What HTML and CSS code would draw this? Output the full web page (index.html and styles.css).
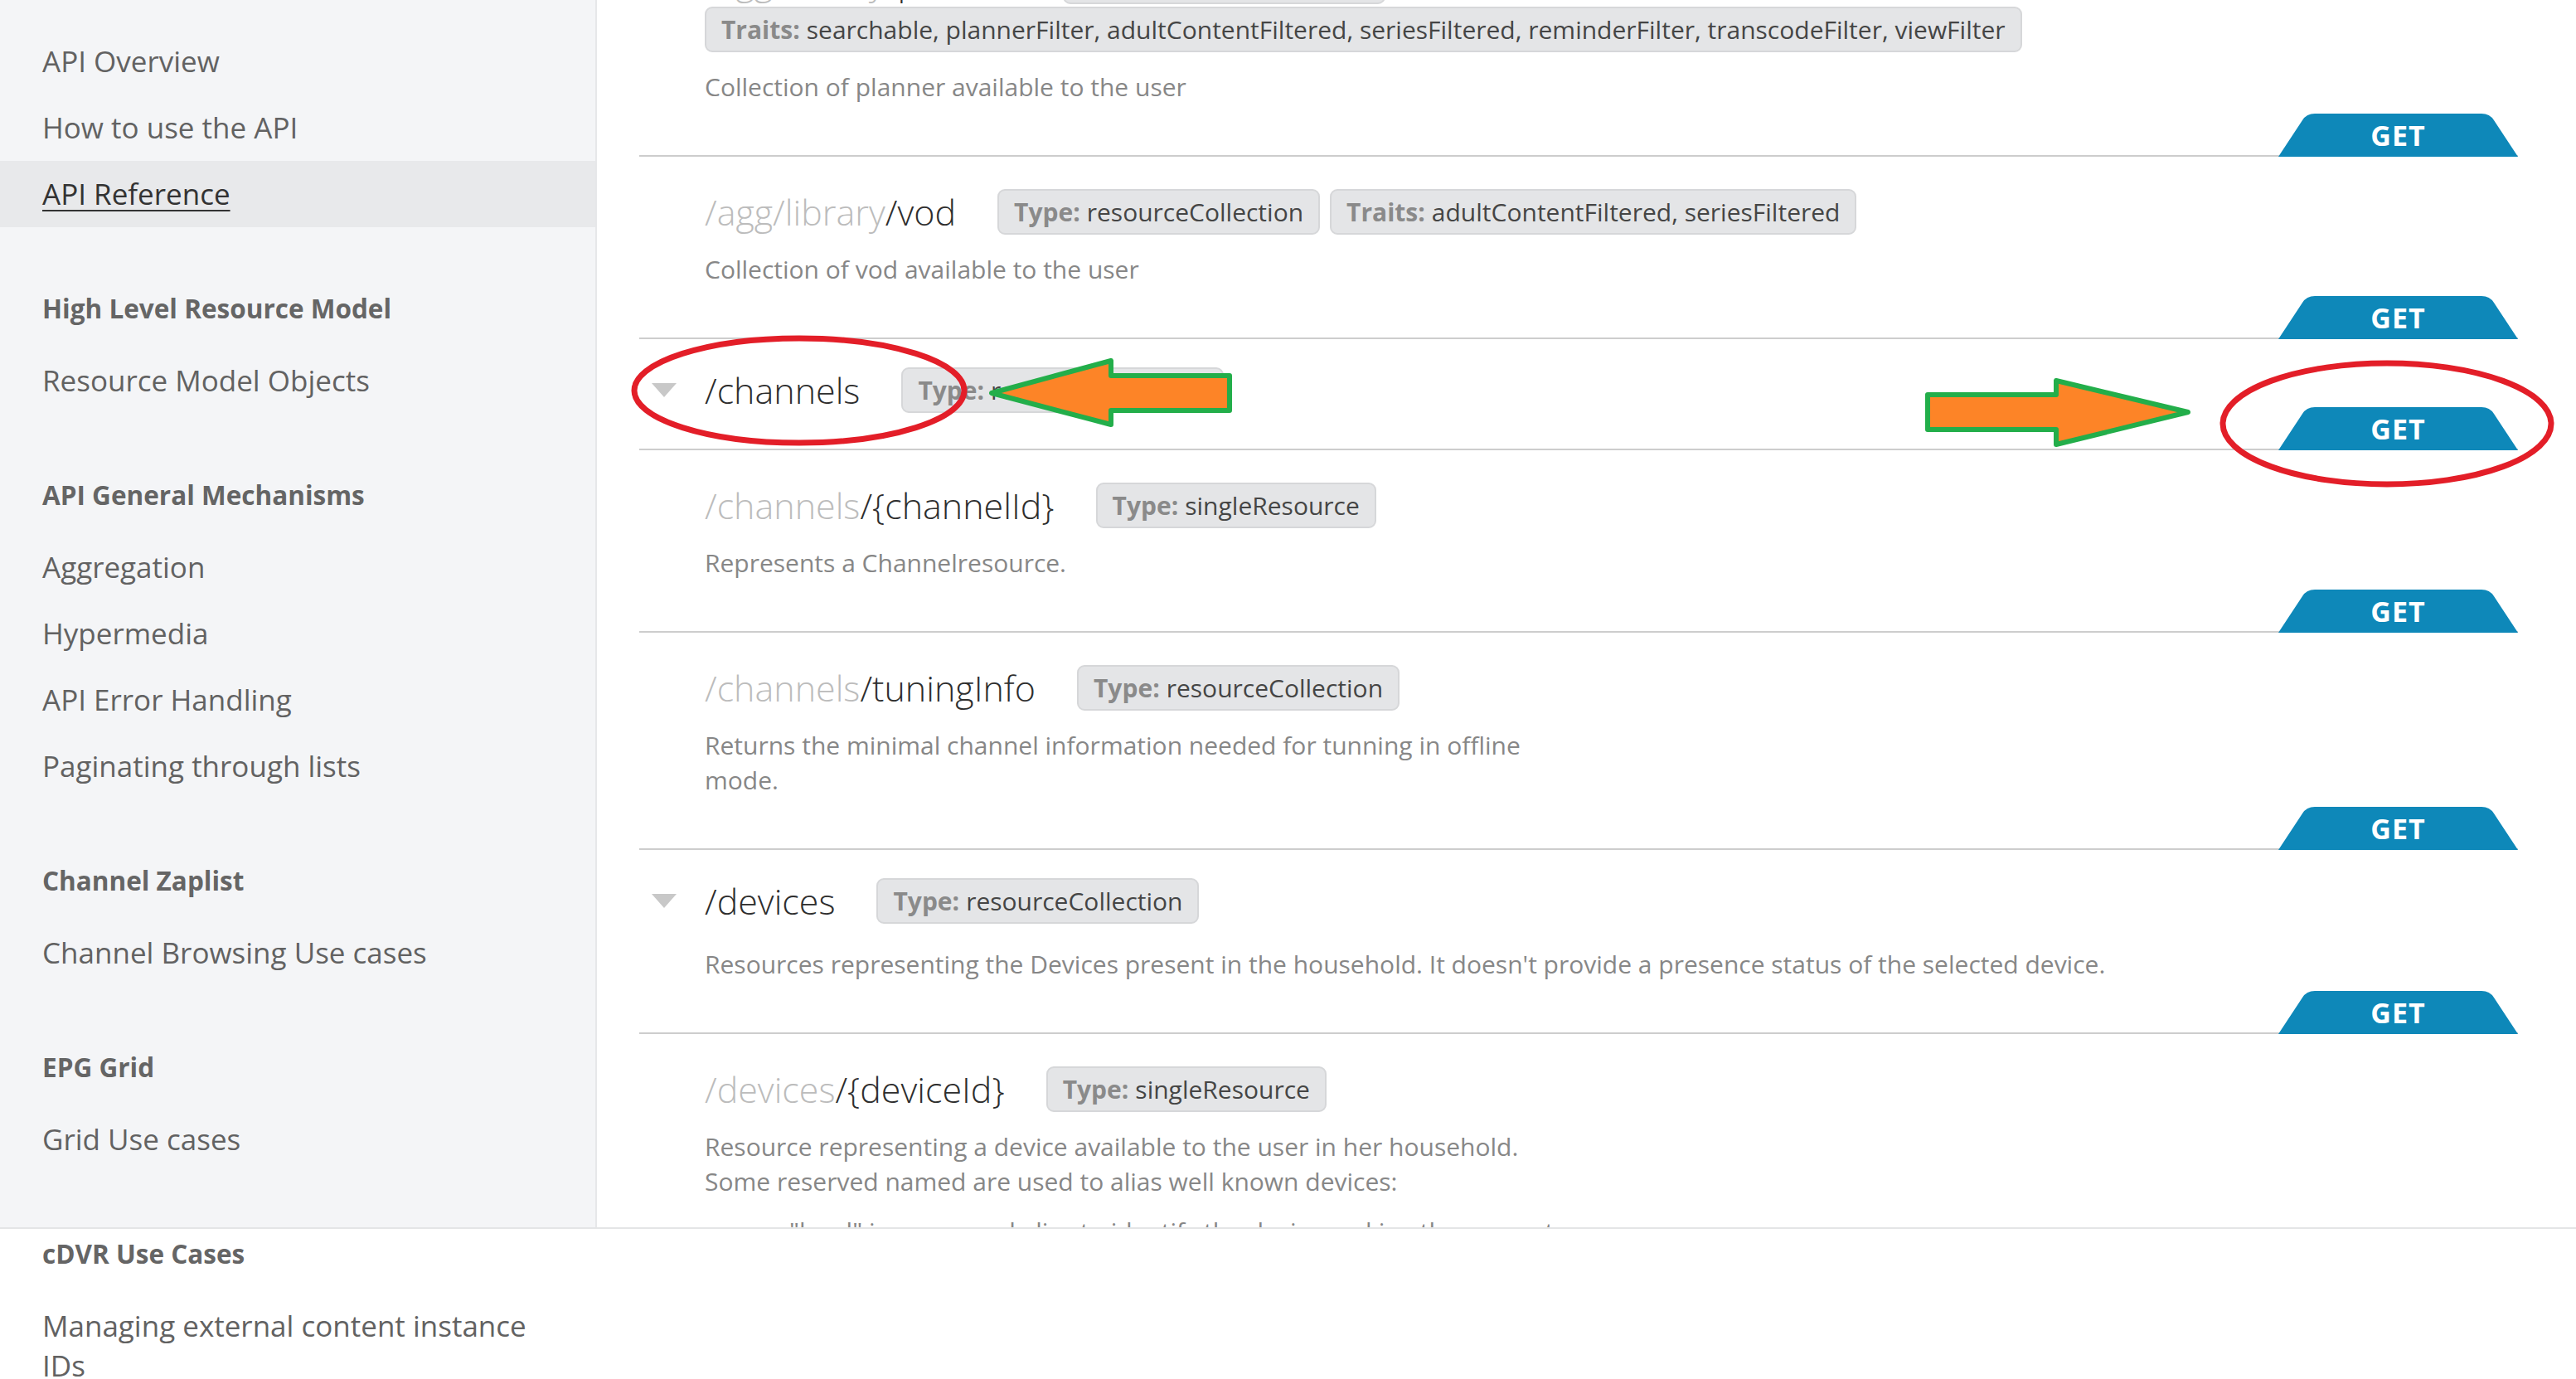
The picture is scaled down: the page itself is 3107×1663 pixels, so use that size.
FILE: index.html
```html
<!DOCTYPE html>
<html lang="en">
<head>
<meta charset="utf-8">
<title>API Reference</title>
<link rel="stylesheet" href="styles.css">
</head>
<body>
<div class="frame">
  <aside class="sidebar">
    <nav class="nav">
      <a class="nav-item" href="#">API Overview</a>
      <a class="nav-item" href="#">How to use the API</a>
      <a class="nav-item active" href="#">API Reference</a>

      <h3 class="nav-head">High Level Resource Model</h3>
      <a class="nav-item" href="#">Resource Model Objects</a>

      <h3 class="nav-head">API General Mechanisms</h3>
      <a class="nav-item" href="#">Aggregation</a>
      <a class="nav-item" href="#">Hypermedia</a>
      <a class="nav-item" href="#">API Error Handling</a>
      <a class="nav-item" href="#">Paginating through lists</a>

      <h3 class="nav-head">Channel Zaplist</h3>
      <a class="nav-item" href="#">Channel Browsing Use cases</a>

      <h3 class="nav-head">EPG Grid</h3>
      <a class="nav-item" href="#">Grid Use cases</a>
    </nav>
  </aside>

  <main class="content">
    <section class="res first">
      <div class="res-head">
        <h2 class="path"><span class="pre">/agg/library</span>/planner</h2>
        <span class="tag"><b>Type:</b> resourceCollection</span>
        <span class="tag"><b>Traits:</b> searchable, plannerFilter, adultContentFiltered, seriesFiltered, reminderFilter, transcodeFilter, viewFilter</span>
      </div>
      <p class="desc">Collection of planner available to the user</p>
      <span class="get">GET</span>
    </section>

    <section class="res">
      <div class="res-head">
        <h2 class="path"><span class="pre">/agg/library</span>/vod</h2>
        <span class="tag"><b>Type:</b> resourceCollection</span>
        <span class="tag"><b>Traits:</b> adultContentFiltered, seriesFiltered</span>
      </div>
      <p class="desc">Collection of vod available to the user</p>
      <span class="get">GET</span>
    </section>

    <section class="res parent">
      <div class="res-head">
        <span class="toggle"></span>
        <h2 class="path">/channels</h2>
        <span class="tag"><b>Type:</b> resourceCollection</span>
      </div>
      <span class="get">GET</span>
    </section>

    <section class="res">
      <div class="res-head">
        <h2 class="path"><span class="pre">/channels</span>/{channelId}</h2>
        <span class="tag"><b>Type:</b> singleResource</span>
      </div>
      <p class="desc">Represents a Channelresource.</p>
      <span class="get">GET</span>
    </section>

    <section class="res">
      <div class="res-head">
        <h2 class="path"><span class="pre">/channels</span>/tuningInfo</h2>
        <span class="tag"><b>Type:</b> resourceCollection</span>
      </div>
      <p class="desc">Returns the minimal channel information needed for tunning in offline<br>mode.</p>
      <span class="get">GET</span>
    </section>

    <section class="res parent">
      <div class="res-head">
        <span class="toggle"></span>
        <h2 class="path">/devices</h2>
        <span class="tag"><b>Type:</b> resourceCollection</span>
      </div>
      <p class="desc">Resources representing the Devices present in the household. It doesn't provide a presence status of the selected device.</p>
      <span class="get">GET</span>
    </section>

    <section class="res">
      <div class="res-head">
        <h2 class="path"><span class="pre">/devices</span>/{deviceId}</h2>
        <span class="tag"><b>Type:</b> singleResource</span>
      </div>
      <p class="desc">Resource representing a device available to the user in her household.<br>Some reserved named are used to alias well known devices:</p>
      <ul class="list">
        <li>"local" is a reserved alias to identify the device making the request</li>
      </ul>
    </section>
  </main>
</div>

<nav class="nav nav-tail">
  <h3 class="nav-head">cDVR Use Cases</h3>
  <a class="nav-item" href="#">Managing external content instance IDs</a>
</nav>

<svg class="annot" width="3107" height="1663" viewBox="0 0 3107 1663" aria-hidden="true">
  <ellipse cx="964" cy="471" rx="199" ry="63" fill="none" stroke="#e31e28" stroke-width="7"/>
  <polygon points="1196,474 1340,435 1340,453 1483,453 1483,495 1340,495 1340,512" fill="#fd8427" stroke="#23ae4a" stroke-width="6" stroke-linejoin="round"/>
  <polygon points="2639,497 2480,459 2480,476 2325,476 2325,518 2480,518 2480,536" fill="#fd8427" stroke="#23ae4a" stroke-width="6" stroke-linejoin="round"/>
  <ellipse cx="2879" cy="511" rx="198" ry="73" fill="none" stroke="#e31e28" stroke-width="7"/>
</svg>
</body>
</html>
```

FILE: styles.css
```css
* {
  box-sizing: border-box;
}

html {
  overflow: hidden;
}

html,
body {
  margin: 0;
  padding: 0;
  background: #ffffff;
}

body {
  position: relative;
  font-family: "Open Sans", "Liberation Sans", sans-serif;
  color: #606060;
}

.frame {
  display: flex;
  height: 1482px;
  border-bottom: 2px solid #e4e5e6;
}

/* ---------- sidebar ---------- */
.sidebar {
  flex: 0 0 720px;
  background: #f4f5f7;
  border-right: 2px solid #e6e7e9;
}

.nav {
  display: flex;
  flex-direction: column;
  padding-top: 34px;
}

.nav-tail {
  width: 720px;
  padding-top: 0;
}

.nav-tail .nav-head {
  margin-top: 8px;
}

.nav-item {
  display: block;
  padding: 16px 80px 16px 51px;
  font-size: 35px;
  line-height: 48px;
  color: #626262;
  text-decoration: none;
}

.nav-item.active {
  background: #e8e9eb;
  color: #333333;
  text-decoration: underline;
  text-decoration-thickness: 2px;
  text-underline-offset: 6px;
}

.nav-head {
  margin: 76px 0 25px;
  padding-left: 51px;
  font-size: 31.5px;
  line-height: 44px;
  font-weight: 700;
  color: #656565;
}

/* ---------- content ---------- */
.content {
  flex: 1;
  min-width: 0;
  overflow: hidden;
  padding: 0 70px 0 51px;
}

.res {
  position: relative;
  padding: 39px 0 43px 79px;
  border-bottom: 2px solid #cdcdcd;
}

.res.first {
  margin-top: -89px;
}

.res.parent {
  padding-top: 34px;
}

.res-head {
  display: flex;
  flex-wrap: wrap;
  align-items: center;
  gap: 3px 12px;
}

.toggle {
  width: 0;
  height: 0;
  border-left: 15px solid transparent;
  border-right: 15px solid transparent;
  border-top: 17px solid #c8c8c8;
  margin-left: -64px;
  margin-right: 22px;
}

.path {
  margin: 0 38px 0 0;
  font-size: 43px;
  line-height: 55px;
  font-weight: 300;
  color: #2e2e2e;
  white-space: nowrap;
}

.pre {
  color: #bcbcbc;
}

.tag {
  display: inline-flex;
  align-items: center;
  height: 55px;
  padding: 0 18px;
  background: #e4e5e7;
  border: 2px solid #d6d7d9;
  border-radius: 9px;
  font-size: 30px;
  color: #454545;
  white-space: nowrap;
}

.tag b {
  color: #8a8a8a;
  margin-right: 8px;
}

.desc {
  margin: 21px 0 18px;
  font-size: 30px;
  line-height: 42px;
  color: #878787;
}

.res.parent .desc {
  margin-top: 28px;
}

.list {
  margin: 4px 0 0;
  padding-left: 102px;
  font-size: 30px;
  line-height: 42px;
  color: #878787;
}

.get {
  position: absolute;
  right: 0;
  bottom: -2px;
  width: 289px;
  height: 52px;
  display: flex;
  align-items: center;
  justify-content: center;
  background: #0e88b9;
  clip-path: path("M0 52 L29 8 Q34 0 44 0 L245 0 Q255 0 260 8 L289 52 Z");
  color: #ffffff;
  font-size: 34px;
  font-weight: 700;
  letter-spacing: 1px;
}

/* ---------- annotations ---------- */
.annot {
  position: absolute;
  top: 0;
  left: 0;
  pointer-events: none;
}
```
